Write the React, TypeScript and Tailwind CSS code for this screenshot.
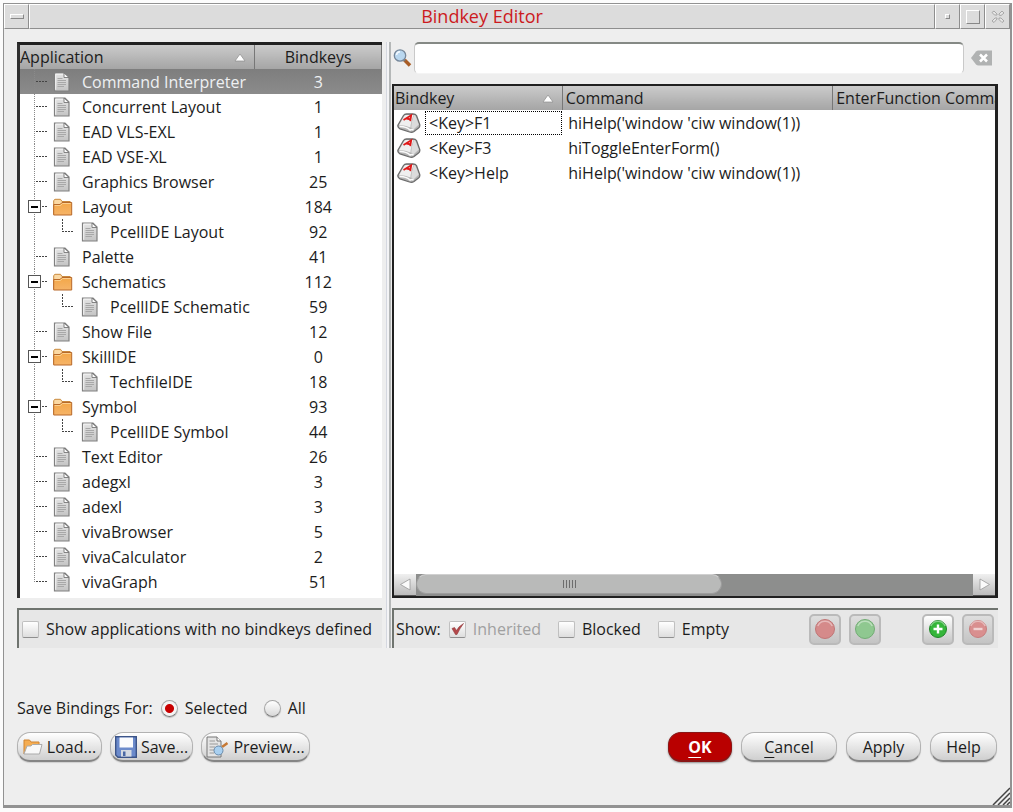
import React, { useState } from "react";

type App = { name: string; count: number; kind?: "folder" | "child" };

const APPS: App[] = [
  { name: "Command Interpreter", count: 3 },
  { name: "Concurrent Layout", count: 1 },
  { name: "EAD VLS-EXL", count: 1 },
  { name: "EAD VSE-XL", count: 1 },
  { name: "Graphics Browser", count: 25 },
  { name: "Layout", count: 184, kind: "folder" },
  { name: "PcellIDE Layout", count: 92, kind: "child" },
  { name: "Palette", count: 41 },
  { name: "Schematics", count: 112, kind: "folder" },
  { name: "PcellIDE Schematic", count: 59, kind: "child" },
  { name: "Show File", count: 12 },
  { name: "SkillIDE", count: 0, kind: "folder" },
  { name: "TechfileIDE", count: 18, kind: "child" },
  { name: "Symbol", count: 93, kind: "folder" },
  { name: "PcellIDE Symbol", count: 44, kind: "child" },
  { name: "Text Editor", count: 26 },
  { name: "adegxl", count: 3 },
  { name: "adexl", count: 3 },
  { name: "vivaBrowser", count: 5 },
  { name: "vivaCalculator", count: 2 },
  { name: "vivaGraph", count: 51 },
];

const BINDINGS = [
  { key: "<Key>F1", command: "hiHelp('window 'ciw window(1))" },
  { key: "<Key>F3", command: "hiToggleEnterForm()" },
  { key: "<Key>Help", command: "hiHelp('window 'ciw window(1))" },
];

function TreeLines({ app, last }: { app: App; last: boolean }) {
  const child = app.kind === "child";
  return (
    <svg width={child ? 61 : 33} height="25" className="shrink-0" shapeRendering="crispEdges" aria-hidden="true">
      <path d={last ? "M14.5 0V13" : "M14.5 0V25"} stroke="#8a8a8a" strokeDasharray="1 1" fill="none" />
      {child && <path d="M42.5 0V13M42 12.5H54" stroke="#444" strokeDasharray="2 1" fill="none" />}
      {!child && <path d="M16 12.5H27" stroke="#444" strokeDasharray="2 1" fill="none" />}
      {app.kind === "folder" && (
        <g>
          <rect x="8.5" y="6.5" width="12" height="12" fill="#fff" stroke="#555" />
          <path d="M11 12.5H18" stroke="#000" strokeWidth="2" />
        </g>
      )}
    </svg>
  );
}

function DocIcon() {
  return (
    <svg width="20" height="20" viewBox="0 0 20 20" className="shrink-0" aria-hidden="true">
      <defs>
        <linearGradient id="page" x1="0" y1="0" x2="0" y2="1">
          <stop offset="0" stopColor="#e4e4e4" />
          <stop offset="1" stopColor="#c4c4c4" />
        </linearGradient>
      </defs>
      <path d="M1.5 1H12L16 5V19H1.5Z" fill="url(#page)" stroke="#808080" strokeWidth="1.2" />
      <path d="M2.700 17.800V2.200H10.500" fill="none" stroke="#f4f4f4" />
      <path d="M11 1L16 5.5H11Z" fill="#fafafa" stroke="#777" strokeWidth=".9" />
      <path d="M4.500 6.500H9.500M4.500 8.5H13M4.500 10.500H13M4.500 12.5H13M4.500 14.500H11" stroke="#a8a8a8" />
    </svg>
  );
}

function FolderIcon() {
  return (
    <svg width="20" height="20" viewBox="0 0 20 20" className="shrink-0" aria-hidden="true">
      <defs>
        <linearGradient id="folder" x1="0" y1="0" x2="0" y2="1">
          <stop offset="0" stopColor="#f3a748" />
          <stop offset="1" stopColor="#f6b468" />
        </linearGradient>
      </defs>
      <path d="M.7 17V3.500L2 2.300H7.5L9 4.5H17.2V6" fill="#fbd9a4" stroke="#c98a3e" />
      <path d="M.7 18V7.5H7L9 5.500H18.7V18Z" fill="url(#folder)" stroke="#b8692a" />
      <path d="M1.7 8.5H7.500L9.500 6.5H17.7" stroke="#fbd08e" fill="none" />
    </svg>
  );
}

function KeyIcon() {
  return (
    <svg width="24" height="22" viewBox="0 0 24 22" className="shrink-0" aria-hidden="true">
      <path d="M1 13L6.500 3.500Q7.500 2 9.500 2H16Q18.500 2 19.500 3.500L22.700 12.500Q23.200 15 21.500 16L17 19.500Q15 20.800 12.500 20L3 16.800Q.2 15.500 1 13Z" fill="#b4b4b4" stroke="#6c6c6c" strokeWidth="1.300" />
      <path d="M2 13.300L7.300 4Q8 3 9.500 3H16.500L14.500 9Q13.500 13 13.500 15.500Q6 12.500 2 13.300Z" fill="#efefef" />
      <path d="M17 3Q18.300 3.300 18.700 4.500L21.800 12.500L16.500 17.500L14.200 15.500Q14.200 10 17 3Z" fill="#dcdcdc" />
      <path d="M2.500 14.500Q9 14.300 13 18Q15 17 16.500 18" stroke="#fafafa" strokeWidth="1.600" fill="none" />
      <path d="M6.500 8L14.200 3.200L13.200 9.200M9.500 6.500L13.300 7.300" stroke="#e01818" strokeWidth="1.800" fill="none" />
    </svg>
  );
}

function SortArrow() {
  return (
    <svg width="12" height="9" viewBox="0 0 12 9" className="mr-2 shrink-0" aria-hidden="true">
      <path d="M6 1L11 8H1Z" fill="#fff" stroke="#8c8c8c" strokeWidth=".7" />
    </svg>
  );
}

function Check({ label, checked, disabled }: { label: string; checked?: boolean; disabled?: boolean }) {
  return (
    <label className={`flex items-center gap-[7px] whitespace-nowrap ${disabled ? "text-[#a0a0a0]" : ""}`}>
      <span className="grid h-[17px] w-[17px] shrink-0 place-items-center">
        <input
          type="checkbox"
          defaultChecked={checked}
          disabled={disabled}
          className="peer col-start-1 row-start-1 h-[17px] w-[17px] appearance-none rounded-[2px] border border-[#c0c0c0] border-b-[#8f8f8f] bg-linear-to-b from-white to-[#dedede]"
        />
        <svg viewBox="0 0 17 17" className="pointer-events-none invisible col-start-1 row-start-1 h-[17px] w-[17px] peer-checked:visible" aria-hidden="true">
          <path d="M3 7.500L5.500 6.500L7.500 9.500Q10 5 14.500 2.500Q11 7 8 13.500H6.500Z" fill="#b4474a" stroke="#8e3a3c" strokeWidth=".6" />
        </svg>
      </span>
      {label}
    </label>
  );
}

function Radio({ label, checked }: { label: string; checked?: boolean }) {
  return (
    <label className="flex items-center gap-[7px]">
      <input
        type="radio"
        name="scope"
        defaultChecked={checked}
        className="h-[17px] w-[17px] appearance-none rounded-full border border-[#a5a5a5] border-b-[#777] bg-linear-to-b from-white to-[#d8d8d8] shadow-[0_1px_1px_#0003] checked:bg-[radial-gradient(circle,#c80000_0_4px,#f4f4f4_5px)]"
      />
      {label}
    </label>
  );
}

function ToolButton({ label, color, edge, sign, active }: { label: string; color: string; edge: string; sign?: "plus" | "minus"; active?: boolean }) {
  return (
    <button
      aria-label={label}
      disabled={!active}
      className={`flex h-[31px] w-8 items-center justify-center rounded-[5px] border-2 border-[#bababa] bg-linear-to-b ${active ? "from-white to-[#c6c6c6]" : "from-[#dedede] to-[#c4c4c4]"}`}
    >
      <svg width="22" height="22" viewBox="0 0 22 22" aria-hidden="true">
        <circle cx="11" cy="11" r={sign ? 8.5 : 9.5} fill={color} stroke={edge} />
        <path d="M3.800 8A7.800 7.800 0 0 1 18.200 8" stroke="#fff" strokeOpacity=".4" strokeWidth="1.500" fill="none" />
        {sign && <path d={sign === "plus" ? "M6.500 11H15.500M11 6.500V15.500" : "M6.500 11H15.500"} stroke="#fff" strokeOpacity={active ? 1 : 0.6} strokeWidth="2.400" />}
      </svg>
    </button>
  );
}

function PushButton({ children, className = "" }: { children: React.ReactNode; className?: string }) {
  return (
    <button
      className={`flex h-[30px] items-center justify-center whitespace-nowrap rounded-[13px] border border-[#b2b2b2] border-b-2 border-b-[#858585] bg-linear-to-b from-white to-[#cfcfcf] shadow-[0_1px_1px_#0002] ${className}`}
    >
      {children}
    </button>
  );
}

const frameButton = "flex h-full w-[25px] shrink-0 items-center justify-center border border-t-white border-l-white border-r-[#8e8e8e] border-b-[#8e8e8e] bg-[#dcdcdc]";
const header = "h-6 bg-linear-to-b from-[#cbcbcb] to-[#a5a5a5] p-0 font-normal";
const divided = "border-r border-[#777]";
const bar = "flex h-10 items-center border-t-2 border-l-2 border-[#6f746f] bg-[#e7e7e7]";

export default function BindkeyEditor() {
  const [selected, setSelected] = useState(0);
  const [query, setQuery] = useState("");

  return (
    <div className="flex min-h-screen flex-col bg-[#fcfcfc] pt-[3px] pr-px pb-1 pl-[3px] font-['Open_Sans',sans-serif] text-base leading-5 text-[#1c1c1c]">
      <main className="flex flex-1 flex-col border border-r-2 border-b-[3px] border-[#929292] bg-[#eee]">
        <header className="flex h-[25px] bg-[#dcdcdc]">
          <button aria-label="Window menu" className={frameButton}>
            <span className="h-[5px] w-[14px] border border-t-white border-l-white border-r-[#888] border-b-[#888] bg-[#ddd]" />
          </button>
          <h1 className="min-w-0 flex-1 border border-t-white border-l-white border-r-[#8e8e8e] border-b-[#8e8e8e] text-center text-lg leading-[22px] text-[#cc1a1e]">
            Bindkey Editor
          </h1>
          <button aria-label="Minimize" className={frameButton}>
            <span className="h-[5px] w-[5px] border border-t-white border-l-white border-r-[#888] border-b-[#888]" />
          </button>
          <button aria-label="Maximize" className={frameButton}>
            <span className="h-[14px] w-[14px] border border-t-white border-l-white border-r-[#888] border-b-[#888]" />
          </button>
          <button aria-label="Close" className={frameButton}>
            <svg width="15" height="15" viewBox="0 0 15 15" aria-hidden="true">
              <path d="M2 3.500L4 2L7 5V6H4.500ZM9 6V5L12 2L14 4L11 6.500ZM2 12L5 9H7V10L4 13.500ZM9 9H11L14 12L12 13.500L9 10.500Z" fill="#e6e6e6" stroke="#999" strokeWidth=".8" />
            </svg>
          </button>
        </header>

        <div className="grid grid-cols-[minmax(0,365fr)_8px_minmax(0,606fr)] gap-x-px pt-[13px] pr-3 pl-[13px]">
          <section className="flex flex-col gap-[10px]">
            <div className="flex-1 border-t-[3px] border-l-[3px] border-t-[#202020] border-l-[#303030] bg-white pb-1">
              <table className="w-full table-fixed border-collapse">
                <colgroup>
                  <col className="w-[65%]" />
                  <col />
                </colgroup>
                <thead>
                  <tr>
                    <th className={`${header} ${divided} text-left`}>
                      <span className="flex items-center justify-between">Application<SortArrow /></span>
                    </th>
                    <th className={`${header} ${divided} text-center`}>Bindkeys</th>
                  </tr>
                </thead>
                <tbody>
                  {APPS.map((app, i) => (
                    <tr
                      key={app.name}
                      onClick={() => setSelected(i)}
                      className={i === selected ? "bg-linear-to-b from-[#7e7e7e] to-[#8b8b8b] text-[#eef0f2]" : ""}
                    >
                      <td className="p-0">
                        <span className="flex h-[25px] items-center whitespace-nowrap">
                          <TreeLines app={app} last={i === APPS.length - 1} />
                          {app.kind === "folder" ? <FolderIcon /> : <DocIcon />}
                          <span className="pl-[9px]">{app.name}</span>
                        </span>
                      </td>
                      <td className="p-0 text-center">{app.count}</td>
                    </tr>
                  ))}
                </tbody>
              </table>
            </div>
            <div className={`${bar} pl-[3px]`}>
              <Check label="Show applications with no bindkeys defined" />
            </div>
          </section>

          <div className="ml-[3px] border-r-2 border-l border-r-[#b5b8b8] border-l-[#d5d8e0] bg-[#f4f4f6]" />

          <section className="flex min-w-0 flex-col gap-[10px]">
            <div className="flex h-8 items-center">
              <svg width="22" height="20" viewBox="0 0 22 20" className="shrink-0" aria-hidden="true">
                <path d="M12.500 12L18 17.500" stroke="#a95d25" strokeWidth="3.500" />
                <path d="M11 11L13 13" stroke="#777" strokeWidth="2" />
                <circle cx="8" cy="7.500" r="5.700" fill="#b9d7ef" stroke="#76879a" strokeWidth="1.300" />
                <path d="M4.500 7A3.500 3.500 0 0 1 8 3.800" stroke="#f2f9ff" strokeWidth="1.500" fill="none" />
              </svg>
              <input
                aria-label="Search bindkeys"
                value={query}
                onChange={(e) => setQuery(e.target.value)}
                className="h-full min-w-0 flex-1 rounded-[5px] border border-t-2 border-[#c9c9c9] border-t-[#858985] border-b-[#f4f4f4] bg-white px-2 outline-none"
              />
              <button aria-label="Clear search" onClick={() => setQuery("")} className="mr-[6px] ml-[7px]">
                <svg width="21" height="16" viewBox="0 0 21 16" aria-hidden="true">
                  <path d="M0 8L5 1.500Q6 .5 7.500 .5H21V15.500H7.500Q6 15.500 5 14.500Z" fill="#b0b2b2" />
                  <path d="M9 4.500L16 11.500M16 4.500L9 11.500" stroke="#fff" strokeWidth="2.500" />
                </svg>
              </button>
            </div>

            <div className="flex flex-1 flex-col border-2 border-r-[3px] border-[#202020] bg-white">
              <div className="flex-1 overflow-hidden">
                <table className="w-full table-fixed border-collapse">
                  <colgroup>
                    <col className="w-[28%]" />
                    <col className="w-[45%]" />
                    <col />
                  </colgroup>
                  <thead>
                    <tr>
                      <th className={`${header} ${divided} text-left`}>
                        <span className="flex items-center justify-between pl-px">Bindkey<SortArrow /></span>
                      </th>
                      <th className={`${header} ${divided} text-left`}><span className="pl-[3px]">Command</span></th>
                      <th className={`${header} overflow-hidden text-left whitespace-nowrap`}><span className="pl-[3px]">EnterFunction Command</span></th>
                    </tr>
                  </thead>
                  <tbody>
                    {BINDINGS.map((b, i) => (
                      <tr key={b.key}>
                        <td className="p-0">
                          <span className="flex h-[25px] items-center pl-[3px]">
                            <KeyIcon />
                            <span className={`ml-1 flex-1 border border-dotted py-px pl-[3px] ${i === 0 ? "border-black" : "border-transparent"}`}>{b.key}</span>
                          </span>
                        </td>
                        <td className="p-0 pl-[6px] whitespace-nowrap">{b.command}</td>
                        <td className="p-0" />
                      </tr>
                    ))}
                  </tbody>
                </table>
              </div>
              <div className="flex h-[22px] bg-[#8d8e8d]">
                <button aria-label="Scroll left" className="flex w-[22px] items-center justify-center border-b border-[#555] bg-linear-to-b from-[#f0f0f0] to-[#bcbcbc]">
                  <svg width="13" height="13" viewBox="0 0 13 13" aria-hidden="true"><path d="M11 1L1.500 6.500L11 12Z" fill="#fafafa" stroke="#999" strokeWidth=".8" /></svg>
                </button>
                <div className="min-w-0 flex-1">
                  <div className="flex h-5 w-[55%] items-center justify-center gap-[2px] rounded-full border border-[#9d9d9d] border-t-[#d0d0d0] bg-[#b9bab9]">
                    {[0, 1, 2, 3, 4].map((n) => <span key={n} className="h-2 w-px bg-[#6d6d6d]" />)}
                  </div>
                </div>
                <button aria-label="Scroll right" className="flex w-[22px] items-center justify-center border-b border-[#555] bg-linear-to-b from-[#f0f0f0] to-[#bcbcbc]">
                  <svg width="13" height="13" viewBox="0 0 13 13" aria-hidden="true"><path d="M2 1L11.500 6.500L2 12Z" fill="#fafafa" stroke="#999" strokeWidth=".8" /></svg>
                </button>
              </div>
            </div>

            <div className={`${bar} gap-[17px] pr-1 pl-[2px]`}>
              <div className="flex items-center gap-2">
                Show:
                <Check label="Inherited" checked disabled />
              </div>
              <Check label="Blocked" />
              <Check label="Empty" />
              <div className="ml-auto flex gap-[41px]">
                <div className="flex gap-2">
                  <ToolButton label="Block" color="#d58a8a" edge="#c07676" />
                  <ToolButton label="Unblock" color="#8fc890" edge="#72ac74" />
                </div>
                <div className="flex gap-2">
                  <ToolButton label="Add" color="#35b63a" edge="#1f8527" sign="plus" active />
                  <ToolButton label="Remove" color="#d98f8f" edge="#c77d7d" sign="minus" />
                </div>
              </div>
            </div>
          </section>
        </div>

        <footer className="mt-[50px] flex flex-1 flex-col px-[13px]">
          <fieldset className="flex items-center gap-4">
            <span className="mr-[-8px]">Save Bindings For:</span>
            <Radio label="Selected" checked />
            <Radio label="All" />
          </fieldset>
          <div className="mt-[14px] flex items-center gap-2">
            <PushButton className="w-[85px] gap-1">
              <svg width="20" height="18" viewBox="0 0 20 18" aria-hidden="true">
                <path d="M1 16V2H6.500L8 4H16V8" fill="#f5ad52" stroke="#d08430" />
                <path d="M1 16L4 8H8L9.500 6.500H19L16.500 16Z" fill="#f8f8f8" stroke="#aaa" />
              </svg>
              Load...
            </PushButton>
            <PushButton className="w-[83px] gap-1">
              <svg width="22" height="22" viewBox="0 0 22 22" aria-hidden="true">
                <path d="M.7 .7H21.300V21.300H3L.7 19Z" fill="#6b8acb" stroke="#3c5488" strokeWidth="1.400" />
                <path d="M4.500 1.500H18V11.500H4.500Z" fill="#fafbfd" />
                <path d="M6 14H16.500V20.600H6Z" fill="#d5dae2" />
                <path d="M8 15.500H10.500V20H8Z" fill="#4a68a5" />
              </svg>
              Save...
            </PushButton>
            <PushButton className="w-[109px] gap-[5px]">
              <svg width="22" height="22" viewBox="0 0 22 22" aria-hidden="true">
                <path d="M1 1H11L15 5V21H1Z" fill="#e4e4e4" stroke="#777" />
                <path d="M11 1V5H15" fill="#fff" stroke="#777" />
                <path d="M3.500 5H9M3.500 8H12M3.500 11H9M3.500 14H8M3.500 17H8" stroke="#9a9a9a" />
                <path d="M16 11L21.500 7" stroke="#c77935" strokeWidth="2.500" />
                <circle cx="12.500" cy="14.500" r="4.500" fill="#a9d0f0" stroke="#6a8aaa" />
              </svg>
              Preview...
            </PushButton>
            <div className="ml-auto flex gap-[9px]">
              <button className="h-[30px] w-16 rounded-[13px] border border-[#8a1515] border-b-2 bg-[#b90000] font-bold text-white shadow-[0_1px_2px_#0006]">
                <span className="underline underline-offset-4">O</span>K
              </button>
              <PushButton className="w-24"><span><span className="underline underline-offset-4">C</span>ancel</span></PushButton>
              <PushButton className="w-[75px]">Apply</PushButton>
              <PushButton className="w-[67px]">Help</PushButton>
            </div>
          </div>
        </footer>
        <div className="flex justify-end">
          <svg width="18" height="18" viewBox="0 0 18 18" aria-hidden="true">
            <path d="M1 18L18 1M6 18L18 6M11 18L18 11M15 18L18 15" stroke="#444" strokeWidth="1.500" />
          </svg>
        </div>
      </main>
    </div>
  );
}
